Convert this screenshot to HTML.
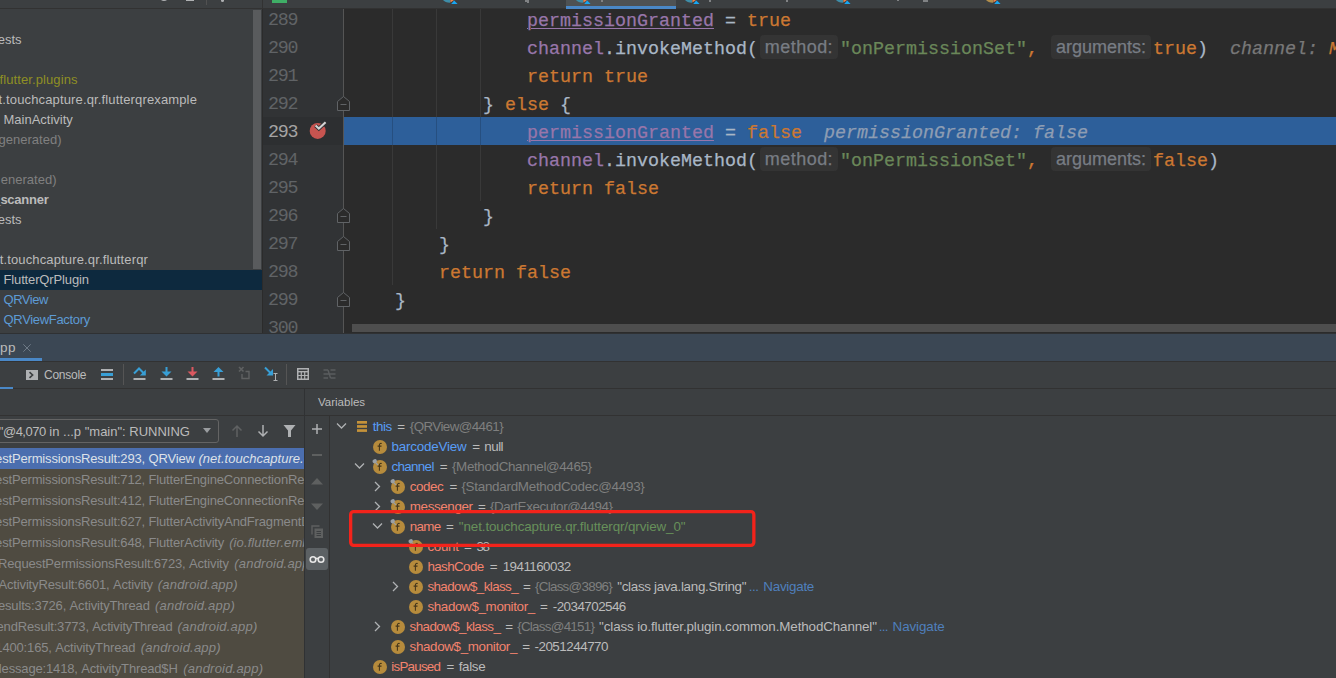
<!DOCTYPE html>
<html>
<head>
<meta charset="utf-8">
<title>Debug</title>
<style>
html,body{margin:0;padding:0;}
body{width:1336px;height:678px;overflow:hidden;background:#3c3f41;position:relative;font-family:"Liberation Sans",sans-serif;color:#bbbbbb;}
.abs{position:absolute;}
div,span{box-sizing:border-box;}
/* ---------- top strip ---------- */
#top{left:0;top:0;width:1336px;height:8px;background:#3c3f41;overflow:hidden;}
#topline{left:0;top:8px;width:1336px;height:1px;background:#323232;}
/* ---------- project ---------- */
#proj{left:0;top:9px;width:262px;height:324px;background:#3c3f41;overflow:hidden;}
.pr{position:absolute;height:20px;line-height:20px;font-size:13px;white-space:nowrap;color:#bbbbbb;}
/* ---------- editor ---------- */
#ed{left:262px;top:9px;width:1074px;height:324px;background:#2b2b2b;overflow:hidden;}
#gut{left:1px;top:0;width:80px;height:324px;background:#313335;}
.ln{position:absolute;left:6px;width:40px;height:28px;line-height:28px;font-family:"Liberation Mono",monospace;font-size:18.33px;color:#606366;white-space:pre;letter-spacing:-1.2px;}
.cl{position:absolute;left:89px;height:28px;line-height:28px;font-family:"Liberation Mono",monospace;font-size:18.33px;color:#a9b7c6;white-space:pre;-webkit-text-stroke:0.25px;}
.k{color:#cc7832;}
.f{color:#9876aa;}
.fu{color:#9876aa;text-decoration:underline;text-decoration-thickness:1px;text-underline-offset:1.5px;}
.s{color:#6a8759;}
.ig{position:absolute;width:1px;background:#393939;}
.hint{display:inline-block;vertical-align:top;height:24px;line-height:25px;border-radius:4px;background:#343434;color:#787d84;font-family:"Liberation Sans",sans-serif;font-size:18px;text-align:center;white-space:nowrap;overflow:hidden;}
.iv{font-style:italic;color:#787878;}
/* ---------- debug ---------- */
#dbg{left:0;top:333px;width:1336px;height:345px;background:#3c3f41;overflow:hidden;}

#dbg .hl{position:absolute;background:#323232;}
.fr{position:absolute;left:0;width:304px;height:21px;overflow:hidden;}
.fr span{position:absolute;top:0;height:21px;line-height:21px;font-size:13px;letter-spacing:-0.157px;white-space:pre;color:#8a8a8a;}
.fr span.i{font-style:italic;letter-spacing:0.2px;}
.vr{position:absolute;height:20px;line-height:20px;font-size:13.4px;white-space:pre;color:#bbbbbb;}
.vb{color:#589df6;}
.vs{color:#f4836e;}
.vg{color:#7f7f7f;}
.vstr{color:#67905a;}
.vn{color:#4f7fbd;}
.fi{position:absolute;width:14px;height:14px;}
.chev{position:absolute;}
</style>
</head>
<body>
<div id="top" class="abs">
<div class="abs" style="left:159px;top:-9px;width:10px;height:10px;border-radius:50%;border:2px solid #afb1b3;"></div>
<div class="abs" style="left:186px;top:0;width:8px;height:1.3px;background:#afb1b3;"></div>
<div class="abs" style="left:206px;top:0;width:1px;height:5px;background:#515151;"></div>
<div class="abs" style="left:221px;top:-1.5px;width:3px;height:3px;border-radius:50%;background:#afb1b3;"></div>
<div class="abs" style="left:262px;top:0;width:1px;height:8px;background:#323232;"></div>
<div class="abs" style="left:272px;top:0;width:15px;height:3.2px;background:#3fae66;overflow:hidden;"><span class="abs" style="left:2px;top:-6px;font-size:8px;line-height:8px;font-weight:bold;color:#1d5a35;">MF</span></div>
<div class="abs" style="left:566px;top:0;width:110px;height:6px;background:#4e5254;"></div>
<svg class="abs" style="left:443px;top:0" width="16" height="5" viewBox="0 0 16 5"><path d="M0 0H7V2.8C3.8 2.8 1.2 1.6 0 0Z" fill="#3e8da8"/><path d="M7.4 0H11L7.4 2.6Z" fill="#f0844c"/><path d="M8.2 3.9L11.2 0.5L14.6 3.9Z" fill="#18a6f2"/></svg>
<svg class="abs" style="left:576px;top:0" width="16" height="5" viewBox="0 0 16 5"><path d="M0 0H7V2.8C3.8 2.8 1.2 1.6 0 0Z" fill="#3e8da8"/><path d="M7.4 0H11L7.4 2.6Z" fill="#f0844c"/><path d="M8.2 3.9L11.2 0.5L14.6 3.9Z" fill="#18a6f2"/></svg>
<svg class="abs" style="left:685px;top:0" width="16" height="5" viewBox="0 0 16 5"><path d="M0 0H7V2.8C3.8 2.8 1.2 1.6 0 0Z" fill="#3e8da8"/><path d="M7.4 0H11L7.4 2.6Z" fill="#f0844c"/><path d="M8.2 3.9L11.2 0.5L14.6 3.9Z" fill="#18a6f2"/></svg>
<svg class="abs" style="left:836px;top:0" width="16" height="5" viewBox="0 0 16 5"><path d="M0 0H7V2.8C3.8 2.8 1.2 1.6 0 0Z" fill="#3e8da8"/><path d="M7.4 0H11L7.4 2.6Z" fill="#f0844c"/><path d="M8.2 3.9L11.2 0.5L14.6 3.9Z" fill="#18a6f2"/></svg>
<svg class="abs" style="left:986px;top:0" width="16" height="5" viewBox="0 0 16 5"><path d="M0 0H7V2.8C3.8 2.8 1.2 1.6 0 0Z" fill="#b08d4c"/><path d="M7.4 0H11L7.4 2.6Z" fill="#f0844c"/><path d="M8.2 3.9L11.2 0.5L14.6 3.9Z" fill="#18a6f2"/></svg>
<div class="abs" style="left:525px;top:0;width:2px;height:1.5px;background:#808284;"></div>
<div class="abs" style="left:527px;top:0;width:1.5px;height:2.5px;background:#808284;"></div>
<div class="abs" style="left:601px;top:0;width:1.5px;height:1.5px;background:#808284;"></div>
<div class="abs" style="left:709px;top:0;width:1.5px;height:1.5px;background:#808284;"></div>
<div class="abs" style="left:786px;top:0;width:2px;height:2px;background:#808284;"></div>
<div class="abs" style="left:897px;top:0;width:1.5px;height:1.2px;background:#808284;"></div>
<div class="abs" style="left:923px;top:0;width:5px;height:1.5px;background:#808284;"></div>
</div>
<div id="topline" class="abs"></div>
<div class="abs" style="left:566px;top:6px;width:110px;height:3px;background:#4a88c7;"></div>
<div id="proj" class="abs">
<div class="abs" style="left:0;top:261px;width:262px;height:20px;background:#0d293e;"></div>
<div class="abs" style="left:253px;top:1px;width:8px;height:259px;background:#595b5d;"></div>
<div class="pr" style="top:21px;color:#bbbbbb;right:240.5px;">ests</div>
<div class="pr" style="top:61px;color:#8f8f24;right:184.4px;letter-spacing:0.1px;">flutter.plugins</div>
<div class="pr" style="top:81px;color:#bbbbbb;right:65px;letter-spacing:0.14px;">t.touchcapture.qr.flutterqrexample</div>
<div class="pr" style="top:101px;color:#bbbbbb;left:3.5px;">MainActivity</div>
<div class="pr" style="top:121px;color:#808080;right:200.5px;">generated)</div>
<div class="pr" style="top:161px;color:#808080;right:205.5px;">enerated)</div>
<div class="pr" style="top:181px;color:#bbbbbb;right:213.5px;font-weight:bold;letter-spacing:-0.25px;">_scanner</div>
<div class="pr" style="top:201px;color:#bbbbbb;right:240.5px;">ests</div>
<div class="pr" style="top:241px;color:#bbbbbb;right:114px;letter-spacing:0.14px;">t.touchcapture.qr.flutterqr</div>
<div class="pr" style="top:261px;color:#bbbbbb;left:3.5px;letter-spacing:-0.14px;">FlutterQrPlugin</div>
<div class="pr" style="top:281px;color:#5d9bd5;left:3.5px;letter-spacing:-0.46px;">QRView</div>
<div class="pr" style="top:301px;color:#5d9bd5;left:3.5px;letter-spacing:-0.32px;">QRViewFactory</div>
</div>
<div id="ed" class="abs">
<div id="gut" class="abs"></div>
<div class="abs" style="left:1px;top:108px;width:80px;height:28px;background:#2d2f31;"></div>
<div class="abs" style="left:82px;top:108px;width:992px;height:28px;background:#2d5f9a;"></div>
<div class="abs" style="left:81px;top:0;width:1px;height:324px;background:#555555;"></div>
<div class="ig" style="left:130px;top:0px;height:276px;background:#393939;"></div>
<div class="ig" style="left:174px;top:0px;height:220px;background:#393939;"></div>
<div class="ig" style="left:218px;top:0px;height:192px;background:#393939;"></div>
<div class="ig" style="left:130px;top:108px;height:28px;background:#264f80;"></div>
<div class="ig" style="left:174px;top:108px;height:28px;background:#264f80;"></div>
<div class="ig" style="left:218px;top:108px;height:28px;background:#264f80;"></div>
<div class="ln" style="top:-1.9px;color:#606366;">289</div>
<div class="ln" style="top:26.1px;color:#606366;">290</div>
<div class="ln" style="top:54.1px;color:#606366;">291</div>
<div class="ln" style="top:82.1px;color:#606366;">292</div>
<div class="ln" style="top:110.1px;color:#a4a3a3;">293</div>
<div class="ln" style="top:138.1px;color:#606366;">294</div>
<div class="ln" style="top:166.1px;color:#606366;">295</div>
<div class="ln" style="top:194.1px;color:#606366;">296</div>
<div class="ln" style="top:222.1px;color:#606366;">297</div>
<div class="ln" style="top:250.1px;color:#606366;">298</div>
<div class="ln" style="top:278.1px;color:#606366;">299</div>
<div class="ln" style="top:306.1px;color:#606366;">300</div>
<div class="cl" style="top:-0.8px;">                <span class="fu">permissionGranted</span> = <span class="k">true</span></div>
<div class="cl" style="top:27.2px;">                <span class="f">channel</span>.invokeMethod(<span class="hint" style="width:78px;margin:-1.5px 2px 0 2px;letter-spacing:0.45px;">method:</span><span class="s">"onPermissionSet"</span><span class="k">,</span> <span class="hint" style="width:100px;margin:-1.5px 2px 0 2px;">arguments:</span><span class="k">true</span>)  <span class="iv">channel: </span><span class="k" style="font-style:italic">MethodChannel@4465</span></div>
<div class="cl" style="top:55.2px;">                <span class="k">return true</span></div>
<div class="cl" style="top:83.2px;">            } <span class="k">else</span> {</div>
<div class="cl" style="top:111.2px;">                <span class="fu">permissionGranted</span> = <span class="k">false</span>  <span class="iv" style="color:#8e9db3">permissionGranted: false</span></div>
<div class="cl" style="top:139.2px;">                <span class="f">channel</span>.invokeMethod(<span class="hint" style="width:78px;margin:-1.5px 2px 0 2px;letter-spacing:0.45px;">method:</span><span class="s">"onPermissionSet"</span><span class="k">,</span> <span class="hint" style="width:100px;margin:-1.5px 2px 0 2px;">arguments:</span><span class="k">false</span>)</div>
<div class="cl" style="top:167.2px;">                <span class="k">return false</span></div>
<div class="cl" style="top:195.2px;">            }</div>
<div class="cl" style="top:223.2px;">        }</div>
<div class="cl" style="top:251.2px;">        <span class="k">return false</span></div>
<div class="cl" style="top:279.2px;">    }</div>
<div class="cl" style="top:307.2px;"></div>
<svg class="abs" style="left:74px;top:86px" width="15" height="17" viewBox="0 0 15 17"><path d="M7.5 1.5 L13.5 6.5 V15.5 H1.5 V6.5 Z" fill="#2b2b2b" stroke="#606366" stroke-width="1"/><path d="M4.5 9.5H10.5" stroke="#606366" stroke-width="1"/></svg>
<svg class="abs" style="left:74px;top:198px" width="15" height="17" viewBox="0 0 15 17"><path d="M7.5 1.5 L13.5 6.5 V15.5 H1.5 V6.5 Z" fill="#2b2b2b" stroke="#606366" stroke-width="1"/><path d="M4.5 9.5H10.5" stroke="#606366" stroke-width="1"/></svg>
<svg class="abs" style="left:74px;top:226px" width="15" height="17" viewBox="0 0 15 17"><path d="M7.5 1.5 L13.5 6.5 V15.5 H1.5 V6.5 Z" fill="#2b2b2b" stroke="#606366" stroke-width="1"/><path d="M4.5 9.5H10.5" stroke="#606366" stroke-width="1"/></svg>
<svg class="abs" style="left:74px;top:282px" width="15" height="17" viewBox="0 0 15 17"><path d="M7.5 1.5 L13.5 6.5 V15.5 H1.5 V6.5 Z" fill="#2b2b2b" stroke="#606366" stroke-width="1"/><path d="M4.5 9.5H10.5" stroke="#606366" stroke-width="1"/></svg>
<svg class="abs" style="left:46px;top:111px" width="22" height="22" viewBox="0 0 22 22"><circle cx="9.7" cy="10.9" r="8" fill="#c75450"/><path d="M7.6 5.6 L10.8 8.6 L17.6 2.2" fill="none" stroke="#313335" stroke-width="4"/><path d="M7.6 5.6 L10.8 8.6 L17.6 2.2" fill="none" stroke="#d4d4d4" stroke-width="2"/></svg>
<div class="abs" style="left:90px;top:315px;width:984px;height:8px;background:#4e4e4e;"></div>
</div>
<div id="dbg" class="abs">
<div class="abs" style="left:0;top:0;width:1336px;height:28px;background:#3b4754;"></div>
<div class="hl" style="left:0;top:0;width:1336px;height:1px;background:#2f3133;"></div>
<div class="abs" style="left:0;top:25px;width:42px;height:3px;background:#4a88c7;"></div>
<div class="abs" style="left:0px;top:5px;height:20px;line-height:20px;font-size:13.5px;letter-spacing:0.4px;color:#bbbbbb;white-space:pre;">pp</div>
<svg class="abs" style="left:22px;top:10px" width="10" height="10" viewBox="0 0 10 10"><path d="M1.3 1.3L8.7 8.7M8.7 1.3L1.3 8.7" stroke="#74808c" stroke-width="0.9" fill="none"/></svg>
<div class="hl" style="left:0;top:28px;width:1336px;height:1px;"></div>
<div class="abs" style="left:0;top:54px;width:13px;height:2px;background:#4a88c7;"></div>
<div class="hl" style="left:13px;top:55px;width:1323px;height:1px;"></div>
<svg class="abs" style="left:26px;top:37px" width="12" height="10" viewBox="0 0 12 10"><rect width="12" height="10" fill="#afb1b3"/><path d="M3.5 2.2L6.6 5L3.5 7.8" stroke="#3c3f41" stroke-width="1.6" fill="none"/></svg>
<div class="abs" style="left:44px;top:32.3px;height:20px;line-height:20px;font-size:12px;letter-spacing:-0.25px;color:#bbbbbb;white-space:pre;">Console</div>
<svg class="abs" style="left:101px;top:35px" width="12" height="13" viewBox="0 0 12 13"><rect y="1" width="12" height="2" fill="#afb1b3"/><rect y="5" width="12" height="3" fill="#389fd6"/><rect y="10" width="12" height="2" fill="#afb1b3"/></svg>
<div class="abs" style="left:123px;top:31px;width:1px;height:21px;background:#555555;"></div>
<svg class="abs" style="left:133px;top:33px" width="14" height="15" viewBox="0 0 14 15"><path d="M1 7.5L6 2.5L11.5 8" stroke="#389fd6" stroke-width="2" fill="none"/><path d="M12.8 3.5V9.5H6.8Z" fill="#389fd6"/><rect x="0.5" y="12" width="12" height="2" fill="#afb1b3"/></svg>
<svg class="abs" style="left:160px;top:33px" width="14" height="15" viewBox="0 0 14 15"><path d="M6.5 1V7" stroke="#389fd6" stroke-width="2" fill="none"/><path d="M1.5 5.5H11.5L6.5 10.5Z" fill="#389fd6"/><rect x="0.5" y="12" width="12" height="2" fill="#afb1b3"/></svg>
<svg class="abs" style="left:186px;top:33px" width="14" height="15" viewBox="0 0 14 15"><path d="M6.5 1V7" stroke="#db5860" stroke-width="2" fill="none"/><path d="M1.5 5.5H11.5L6.5 10.5Z" fill="#db5860"/><rect x="0.5" y="12" width="12" height="2" fill="#afb1b3"/></svg>
<svg class="abs" style="left:212px;top:33px" width="14" height="15" viewBox="0 0 14 15"><path d="M6.5 4V10.5" stroke="#389fd6" stroke-width="2" fill="none"/><path d="M1.5 6H11.5L6.5 1Z" fill="#389fd6"/><rect x="0.5" y="12" width="12" height="2" fill="#afb1b3"/></svg>
<svg class="abs" style="left:238px;top:33px" width="14" height="15" viewBox="0 0 14 15"><path d="M1 1L5.5 5.5M5.5 1L1 5.5" stroke="#5f6162" stroke-width="1.6" fill="none"/><path d="M4 8V12.5H11V5.5H7.5" stroke="#5f6162" stroke-width="1.4" fill="none"/></svg>
<svg class="abs" style="left:264px;top:33px" width="14" height="15" viewBox="0 0 14 15"><path d="M1 1.5L7 7.5" stroke="#389fd6" stroke-width="2" fill="none"/><path d="M9 3V9.5H2.5Z" fill="#389fd6"/><path d="M9.5 7.5H13.5M9.5 14.5H13.5M11.5 7.5V14.5" stroke="#afb1b3" stroke-width="1" fill="none"/></svg>
<div class="abs" style="left:286px;top:31px;width:1px;height:21px;background:#555555;"></div>
<svg class="abs" style="left:297px;top:35px" width="12" height="12" viewBox="0 0 12 12"><rect x="0.75" y="0.75" width="10.5" height="10.5" fill="none" stroke="#afb1b3" stroke-width="1.5"/><rect x="1" y="3" width="10" height="1.4" fill="#afb1b3"/><path d="M4.3 4V11M7.7 4V11M1 7.5H11" stroke="#afb1b3" stroke-width="1.2" fill="none"/></svg>
<svg class="abs" style="left:323px;top:35px" width="13" height="12" viewBox="0 0 13 12"><path d="M0.5 2H5M0.5 6H12.5M0.5 10H5M7.5 2H12.5M7.5 10H12.5M5 2L7.5 10" stroke="#5a5d5f" stroke-width="1.4" fill="none"/></svg>
<div class="abs" style="left:318px;top:59px;height:20px;line-height:20px;font-size:11.5px;color:#bbbbbb;white-space:pre;">Variables</div>
<div class="hl" style="left:0;top:82px;width:1336px;height:1px;"></div>
<div class="hl" style="left:304px;top:56px;width:1px;height:289px;background:#303234;"></div>
<div class="hl" style="left:329px;top:83px;width:1px;height:262px;"></div>
<div class="abs" style="left:-4px;top:86px;width:223px;height:24px;border:1px solid #646464;border-radius:3px;"></div>
<div class="abs" style="right:1146px;top:88.7px;height:20px;line-height:20px;font-size:13px;color:#bbbbbb;white-space:pre;"><span style="letter-spacing:-0.5px">"main"@4,070</span> in ...p "main": RUNNING</div>
<svg class="abs" style="left:202px;top:94px" width="10" height="7" viewBox="0 0 10 7"><path d="M1 1H9L5 6Z" fill="#9a9da0"/></svg>
<svg class="abs" style="left:231px;top:91px" width="12" height="14" viewBox="0 0 12 14"><path d="M6 13V2M1.5 6.5L6 2L10.5 6.5" stroke="#5f6162" stroke-width="1.5" fill="none"/></svg>
<svg class="abs" style="left:257px;top:91px" width="12" height="14" viewBox="0 0 12 14"><path d="M6 1V12M1.5 7.5L6 12L10.5 7.5" stroke="#afb1b3" stroke-width="1.5" fill="none"/></svg>
<svg class="abs" style="left:283px;top:91px" width="13" height="14" viewBox="0 0 13 14"><path d="M0.5 1H12.5L8 6.5V13H5V6.5Z" fill="#afb1b3"/></svg>
<div class="abs" style="left:0;top:115px;width:304px;height:230px;background:#4f4b41;"></div>
<div class="fr" id="fr0" style="top:115px;background:#4b6eaf;"><span style="right:155.5px;color:#dde1e8;">onRequestPermissionsResult:293, </span><span style="left:148.5px;color:#dde1e8;">QRView</span><span class="i" style="left:198.4px;color:#dde1e8;letter-spacing:0.03px;">(net.touchcapture.qr.flutterqr)</span></div>
<div class="fr" id="fr1" style="top:136px;"><span style="right:155.5px;">onRequestPermissionsResult:712, </span><span style="left:148.5px;">FlutterEngineConnectionRegistry$FlutterEngineActivityPluginBinding</span></div>
<div class="fr" id="fr2" style="top:157px;"><span style="right:155.5px;">onRequestPermissionsResult:412, </span><span style="left:148.5px;">FlutterEngineConnectionRegistry</span></div>
<div class="fr" id="fr3" style="top:178px;"><span style="right:155.5px;">onRequestPermissionsResult:627, </span><span style="left:148.5px;">FlutterActivityAndFragmentDelegate</span></div>
<div class="fr" id="fr4" style="top:199px;"><span style="right:155.5px;">onRequestPermissionsResult:648, </span><span style="left:148.5px;">FlutterActivity</span><span class="i" style="left:229.2px;letter-spacing:0.1px;">(io.flutter.embedding.android)</span></div>
<div class="fr" id="fr5" style="top:220px;"><span style="right:115.0px;">dispatchRequestPermissionsResult:6723, </span><span style="left:189.0px;">Activity</span><span class="i" style="left:234.3px;">(android.app)</span></div>
<div class="fr" id="fr6" style="top:241px;"><span style="right:191.0px;">dispatchActivityResult:6601, </span><span style="left:113.0px;">Activity</span><span class="i" style="left:157.8px;">(android.app)</span></div>
<div class="fr" id="fr7" style="top:262px;"><span style="right:234.4px;">deliverResults:3726, </span><span style="left:69.6px;">ActivityThread</span><span class="i" style="left:155.0px;">(android.app)</span></div>
<div class="fr" id="fr8" style="top:283px;"><span style="right:211.7px;">handleSendResult:3773, </span><span style="left:92.3px;">ActivityThread</span><span class="i" style="left:177.5px;">(android.app)</span></div>
<div class="fr" id="fr9" style="top:304px;"><span style="right:248.8px;">access$1400:165, </span><span style="left:55.2px;">ActivityThread</span><span class="i" style="left:140.8px;">(android.app)</span></div>
<div class="fr" id="fr10" style="top:325px;"><span style="right:222.8px;">handleMessage:1418, </span><span style="left:81.2px;">ActivityThread$H</span><span class="i" style="left:183.3px;">(android.app)</span></div>
<svg class="abs" style="left:311px;top:90px" width="12" height="12" viewBox="0 0 12 12"><path d="M6 1V11M1 6H11" stroke="#afb1b3" stroke-width="1.5" fill="none"/></svg>
<div class="abs" style="left:312px;top:121px;width:10px;height:1.5px;background:#5e6060;"></div>
<svg class="abs" style="left:311px;top:144px" width="12" height="8" viewBox="0 0 12 8"><path d="M0 7.5L6 1L12 7.5Z" fill="#5e6060"/></svg>
<svg class="abs" style="left:311px;top:170px" width="12" height="8" viewBox="0 0 12 8"><path d="M0 0.5L6 7L12 0.5Z" fill="#5e6060"/></svg>
<svg class="abs" style="left:311px;top:192px" width="13" height="14" viewBox="0 0 13 14"><path d="M1 9.5V1H8.5" stroke="#5e6060" stroke-width="1.4" fill="none"/><rect x="3.5" y="3.5" width="8.5" height="9.5" fill="#5e6060"/><path d="M5.5 6.5H10M5.5 8.5H10M5.5 10.5H10" stroke="#3c3f41" stroke-width="1"/></svg>
<div class="abs" style="left:306px;top:215px;width:22px;height:22px;border-radius:3px;background:#5c6164;"></div>
<svg class="abs" style="left:309px;top:222px" width="16" height="9" viewBox="0 0 16 9"><circle cx="4" cy="4.5" r="2.8" fill="none" stroke="#e8e8e8" stroke-width="1.6"/><circle cx="12" cy="4.5" r="2.8" fill="none" stroke="#e8e8e8" stroke-width="1.6"/><path d="M6.5 3.5H9.5" stroke="#e8e8e8" stroke-width="1.6"/></svg>
<svg class="abs" style="left:357px;top:88px" width="10" height="11" viewBox="0 0 10 11"><rect y="0" width="10" height="2.7" fill="#c4923a"/><rect y="4.1" width="10" height="2.7" fill="#c4923a"/><rect y="8.2" width="10" height="2.7" fill="#c4923a"/></svg><svg class="chev" style="left:336.0px;top:88.0px" width="11" height="11" viewBox="0 0 11 11"><path d="M1 2.5L5.5 7L10 2.5" stroke="#afb1b3" stroke-width="1.3" fill="none"/></svg><span class="vr vb" style="left:372.8px;top:83.7px;letter-spacing:-0.515px;">this</span><span class="vr" style="left:397.3px;top:83.7px;">=</span><span class="vr vg" style="left:409.8px;top:83.7px;letter-spacing:-0.596px;">{QRView@4461}</span>
<svg class="fi" style="left:370.8px;top:105.2px;width:18px;height:18px" viewBox="0 0 18 18"><circle cx="9" cy="9" r="7" fill="#b68b3c"/><path d="M10.7 5.5C9.3 5.1 8.4 5.7 8.4 7.1V12.7M6.6 8.1H10.5" stroke="#45361a" stroke-width="1.05" fill="none"/></svg><span class="vr vb" style="left:391.4px;top:103.7px;letter-spacing:-0.189px;">barcodeView</span><span class="vr" style="left:472.3px;top:103.7px;">=</span><span class="vr" style="left:484.3px;top:103.7px;letter-spacing:-0.520px;">null</span>
<svg class="fi" style="left:370.8px;top:125.2px;width:18px;height:18px" viewBox="0 0 18 18"><circle cx="9" cy="9" r="7" fill="#b68b3c"/><path d="M10.7 5.5C9.3 5.1 8.4 5.7 8.4 7.1V12.7M6.6 8.1H10.5" stroke="#45361a" stroke-width="1.05" fill="none"/><ellipse cx="3.7" cy="3.2" rx="2.3" ry="2" fill="#9aa0a6" transform="rotate(-30 3.7 3.2)"/><path d="M4.5 4.5L7 7" stroke="#9aa0a6" stroke-width="1.1"/></svg><svg class="chev" style="left:353.8px;top:128.0px" width="11" height="11" viewBox="0 0 11 11"><path d="M1 2.5L5.5 7L10 2.5" stroke="#afb1b3" stroke-width="1.3" fill="none"/></svg><span class="vr vb" style="left:391.4px;top:123.7px;letter-spacing:-0.654px;">channel</span><span class="vr" style="left:439.8px;top:123.7px;">=</span><span class="vr vg" style="left:452.0px;top:123.7px;letter-spacing:-0.357px;">{MethodChannel@4465}</span>
<svg class="fi" style="left:388.8px;top:145.2px;width:18px;height:18px" viewBox="0 0 18 18"><circle cx="9" cy="9" r="7" fill="#b68b3c"/><path d="M10.7 5.5C9.3 5.1 8.4 5.7 8.4 7.1V12.7M6.6 8.1H10.5" stroke="#45361a" stroke-width="1.05" fill="none"/><ellipse cx="3.7" cy="3.2" rx="2.3" ry="2" fill="#9aa0a6" transform="rotate(-30 3.7 3.2)"/><path d="M4.5 4.5L7 7" stroke="#9aa0a6" stroke-width="1.1"/></svg><svg class="chev" style="left:371.8px;top:148.0px" width="11" height="11" viewBox="0 0 11 11"><path d="M3 1L7.5 5.5L3 10" stroke="#afb1b3" stroke-width="1.3" fill="none"/></svg><span class="vr vs" style="left:409.8px;top:143.7px;letter-spacing:-0.434px;">codec</span><span class="vr" style="left:449.4px;top:143.7px;">=</span><span class="vr vg" style="left:461.4px;top:143.7px;letter-spacing:-0.266px;">{StandardMethodCodec@4493}</span>
<svg class="fi" style="left:388.8px;top:165.2px;width:18px;height:18px" viewBox="0 0 18 18"><circle cx="9" cy="9" r="7" fill="#b68b3c"/><path d="M10.7 5.5C9.3 5.1 8.4 5.7 8.4 7.1V12.7M6.6 8.1H10.5" stroke="#45361a" stroke-width="1.05" fill="none"/><ellipse cx="3.7" cy="3.2" rx="2.3" ry="2" fill="#9aa0a6" transform="rotate(-30 3.7 3.2)"/><path d="M4.5 4.5L7 7" stroke="#9aa0a6" stroke-width="1.1"/></svg><svg class="chev" style="left:371.8px;top:168.0px" width="11" height="11" viewBox="0 0 11 11"><path d="M3 1L7.5 5.5L3 10" stroke="#afb1b3" stroke-width="1.3" fill="none"/></svg><span class="vr vs" style="left:409.8px;top:163.7px;letter-spacing:-0.381px;">messenger</span><span class="vr" style="left:478.1px;top:163.7px;">=</span><span class="vr vg" style="left:489.9px;top:163.7px;letter-spacing:-0.409px;">{DartExecutor@4494}</span>
<svg class="fi" style="left:388.8px;top:185.2px;width:18px;height:18px" viewBox="0 0 18 18"><circle cx="9" cy="9" r="7" fill="#b68b3c"/><path d="M10.7 5.5C9.3 5.1 8.4 5.7 8.4 7.1V12.7M6.6 8.1H10.5" stroke="#45361a" stroke-width="1.05" fill="none"/><ellipse cx="3.7" cy="3.2" rx="2.3" ry="2" fill="#9aa0a6" transform="rotate(-30 3.7 3.2)"/><path d="M4.5 4.5L7 7" stroke="#9aa0a6" stroke-width="1.1"/></svg><svg class="chev" style="left:371.8px;top:188.0px" width="11" height="11" viewBox="0 0 11 11"><path d="M1 2.5L5.5 7L10 2.5" stroke="#afb1b3" stroke-width="1.3" fill="none"/></svg><span class="vr vs" style="left:409.8px;top:183.7px;letter-spacing:-0.700px;">name</span><span class="vr" style="left:446.1px;top:183.7px;">=</span><span class="vr vstr" style="left:458.8px;top:183.7px;letter-spacing:-0.099px;">"net.touchcapture.qr.flutterqr/qrview_0"</span>
<svg class="fi" style="left:406.8px;top:205.2px;width:18px;height:18px" viewBox="0 0 18 18"><circle cx="9" cy="9" r="7" fill="#b68b3c"/><path d="M10.7 5.5C9.3 5.1 8.4 5.7 8.4 7.1V12.7M6.6 8.1H10.5" stroke="#45361a" stroke-width="1.05" fill="none"/><ellipse cx="3.7" cy="3.2" rx="2.3" ry="2" fill="#9aa0a6" transform="rotate(-30 3.7 3.2)"/><path d="M4.5 4.5L7 7" stroke="#9aa0a6" stroke-width="1.1"/></svg><span class="vr vs" style="left:427.4px;top:203.7px;letter-spacing:-0.316px;">count</span><span class="vr" style="left:464.1px;top:203.7px;">=</span><span class="vr" style="left:476.5px;top:203.7px;letter-spacing:-1.406px;">38</span>
<svg class="fi" style="left:406.8px;top:225.2px;width:18px;height:18px" viewBox="0 0 18 18"><circle cx="9" cy="9" r="7" fill="#b68b3c"/><path d="M10.7 5.5C9.3 5.1 8.4 5.7 8.4 7.1V12.7M6.6 8.1H10.5" stroke="#45361a" stroke-width="1.05" fill="none"/></svg><span class="vr vs" style="left:427.4px;top:223.7px;letter-spacing:-0.595px;">hashCode</span><span class="vr" style="left:489.8px;top:223.7px;">=</span><span class="vr" style="left:502.7px;top:223.7px;letter-spacing:-0.543px;">1941160032</span>
<svg class="fi" style="left:406.8px;top:245.2px;width:18px;height:18px" viewBox="0 0 18 18"><circle cx="9" cy="9" r="7" fill="#b68b3c"/><path d="M10.7 5.5C9.3 5.1 8.4 5.7 8.4 7.1V12.7M6.6 8.1H10.5" stroke="#45361a" stroke-width="1.05" fill="none"/></svg><svg class="chev" style="left:389.8px;top:248.0px" width="11" height="11" viewBox="0 0 11 11"><path d="M3 1L7.5 5.5L3 10" stroke="#afb1b3" stroke-width="1.3" fill="none"/></svg><span class="vr vs" style="left:427.4px;top:243.7px;letter-spacing:-0.594px;">shadow$_klass_</span><span class="vr" style="left:523.1px;top:243.7px;">=</span><span class="vr vg" style="left:535.0px;top:243.7px;letter-spacing:-0.728px;">{Class@3896}</span><span class="vr" style="left:617.2px;top:243.7px;letter-spacing:-0.293px;">"class java.lang.String"</span><span class="vr vn" style="left:748.8px;top:243.7px;letter-spacing:-0.486px;">...</span><span class="vr vn" style="left:763.3px;top:243.7px;letter-spacing:-0.266px;">Navigate</span>
<svg class="fi" style="left:406.8px;top:265.2px;width:18px;height:18px" viewBox="0 0 18 18"><circle cx="9" cy="9" r="7" fill="#b68b3c"/><path d="M10.7 5.5C9.3 5.1 8.4 5.7 8.4 7.1V12.7M6.6 8.1H10.5" stroke="#45361a" stroke-width="1.05" fill="none"/></svg><span class="vr vs" style="left:427.4px;top:263.7px;letter-spacing:-0.357px;">shadow$_monitor_</span><span class="vr" style="left:540.1px;top:263.7px;">=</span><span class="vr" style="left:552.8px;top:263.7px;letter-spacing:-0.544px;">-2034702546</span>
<svg class="fi" style="left:388.8px;top:285.2px;width:18px;height:18px" viewBox="0 0 18 18"><circle cx="9" cy="9" r="7" fill="#b68b3c"/><path d="M10.7 5.5C9.3 5.1 8.4 5.7 8.4 7.1V12.7M6.6 8.1H10.5" stroke="#45361a" stroke-width="1.05" fill="none"/></svg><svg class="chev" style="left:371.8px;top:288.0px" width="11" height="11" viewBox="0 0 11 11"><path d="M3 1L7.5 5.5L3 10" stroke="#afb1b3" stroke-width="1.3" fill="none"/></svg><span class="vr vs" style="left:409.6px;top:283.7px;letter-spacing:-0.594px;">shadow$_klass_</span><span class="vr" style="left:505.2px;top:283.7px;">=</span><span class="vr vg" style="left:517.2px;top:283.7px;letter-spacing:-0.728px;">{Class@4151}</span><span class="vr" style="left:599.1px;top:283.7px;letter-spacing:-0.123px;">"class io.flutter.plugin.common.MethodChannel"</span><span class="vr vn" style="left:878.8px;top:283.7px;letter-spacing:-0.736px;">...</span><span class="vr vn" style="left:892.6px;top:283.7px;letter-spacing:-0.108px;">Navigate</span>
<svg class="fi" style="left:388.8px;top:305.2px;width:18px;height:18px" viewBox="0 0 18 18"><circle cx="9" cy="9" r="7" fill="#b68b3c"/><path d="M10.7 5.5C9.3 5.1 8.4 5.7 8.4 7.1V12.7M6.6 8.1H10.5" stroke="#45361a" stroke-width="1.05" fill="none"/></svg><span class="vr vs" style="left:409.6px;top:303.7px;letter-spacing:-0.357px;">shadow$_monitor_</span><span class="vr" style="left:522.3px;top:303.7px;">=</span><span class="vr" style="left:534.5px;top:303.7px;letter-spacing:-0.494px;">-2051244770</span>
<svg class="fi" style="left:370.8px;top:325.2px;width:18px;height:18px" viewBox="0 0 18 18"><circle cx="9" cy="9" r="7" fill="#b68b3c"/><path d="M10.7 5.5C9.3 5.1 8.4 5.7 8.4 7.1V12.7M6.6 8.1H10.5" stroke="#45361a" stroke-width="1.05" fill="none"/></svg><span class="vr vs" style="left:391.3px;top:323.7px;letter-spacing:-0.771px;">isPaused</span><span class="vr" style="left:446.5px;top:323.7px;">=</span><span class="vr" style="left:458.7px;top:323.7px;letter-spacing:-0.349px;">false</span>
<svg class="abs" style="left:347px;top:175px" width="412" height="41" viewBox="0 0 412 41"><rect x="3.65" y="3.65" width="403.2" height="33.7" rx="3" ry="3" fill="none" stroke="#f3231b" stroke-width="3.3"/></svg>
</div>
</body>
</html>
